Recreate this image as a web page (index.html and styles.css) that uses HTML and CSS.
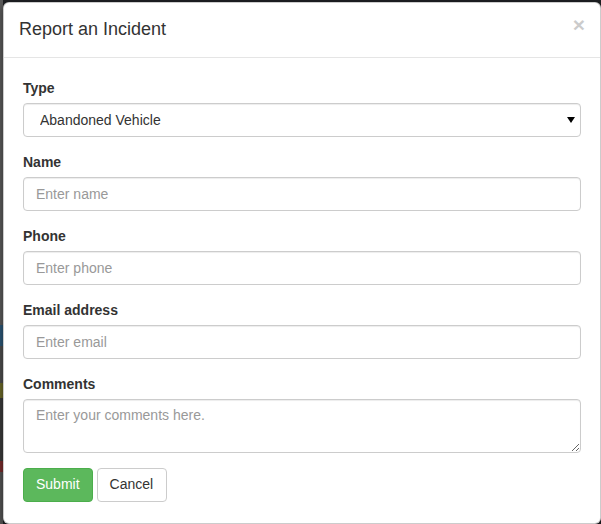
FILE: index.html
```html
<!DOCTYPE html>
<html lang="en">

<head>
    <meta charset="UTF-8">
    <meta name="viewport" content="width=device-width, initial-scale=1.0">
    <title>Report an Incident</title>
    <link rel="stylesheet" href="styles.css">
</head>

<body>
    <div class="backdrop">
        <div class="modal">
            <div class="modal-header">
                <button type="button" class="close">&times;</button>
                <h4 class="modal-title">Report an Incident</h4>
            </div>
            <div class="modal-body">
                <form>
                    <div class="form-group">
                        <label for="type">Type</label>
                        <div class="select-wrap">
                            <select id="type" class="form-control select">
                                <option>Abandoned Vehicle</option>
                                <option>Graffiti</option>
                                <option>Pothole</option>
                            </select>
                            <svg class="caret" width="8" height="6" viewBox="0 0 8 6">
                                <path d="M0 0 L8 0 L4 6 Z" fill="#000" />
                            </svg>
                        </div>
                    </div>
                    <div class="form-group">
                        <label for="name">Name</label>
                        <input id="name" class="form-control" type="text" placeholder="Enter name">
                    </div>
                    <div class="form-group">
                        <label for="phone">Phone</label>
                        <input id="phone" class="form-control" type="text" placeholder="Enter phone">
                    </div>
                    <div class="form-group">
                        <label for="email">Email address</label>
                        <input id="email" class="form-control" type="email" placeholder="Enter email">
                    </div>
                    <div class="form-group last">
                        <label for="comments">Comments</label>
                        <textarea id="comments" class="form-control" rows="2" placeholder="Enter your comments here."></textarea>
                    </div>
                    <div class="actions">
                        <button type="submit" class="btn btn-success">Submit</button>
                        <button type="button" class="btn btn-default">Cancel</button>
                    </div>
                </form>
            </div>
        </div>
    </div>
</body>

</html>
```

FILE: styles.css
```css
* {
    box-sizing: border-box;
}

html,
body {
    margin: 0;
    height: 100%;
}

body {
    font-family: "Liberation Sans", Arial, sans-serif;
    font-size: 14px;
    line-height: 1.42857;
    color: #333;
    overflow: hidden;
}

.backdrop {
    height: 100%;
    padding-top: 2px;
    padding-left: 3px;
    background:
        linear-gradient(to bottom, #5b5b5b 0, #5b5b5b 62%, #2d5878 62%, #2d5878 66%, #4f4f4f 66%, #4f4f4f 73%, #6d6a2a 73%, #6d6a2a 76%, #3b3b3b 76%, #3b3b3b 88%, #7a2d2d 88%, #7a2d2d 90%, #555 90%) left top / 3px 100% no-repeat,
        #1e2023;
}

.modal {
    width: 598px;
    background: #fff;
    border: 1px solid rgba(0, 0, 0, 0.2);
    border-radius: 6px;
    box-shadow: 0 3px 9px rgba(0, 0, 0, 0.5);
}

.modal-header {
    padding: 14px 15px;
    border-bottom: 1px solid #e5e5e5;
}

.modal-title {
    margin: 0;
    font-size: 18px;
    font-weight: normal;
    line-height: 1.42857;
}

.close {
    float: right;
    margin-top: -3px;
    margin-right: 0;
    padding: 0;
    border: 0;
    background: transparent;
    font-family: "Liberation Sans", Arial, sans-serif;
    font-size: 21px;
    font-weight: bold;
    line-height: 1;
    color: #000;
    opacity: 0.2;
    cursor: pointer;
}

.modal-body {
    padding: 21px 19px 21px 19px;
}

.form-group {
    margin-bottom: 16px;
}

.form-group.last {
    margin-bottom: 15px;
}

label {
    display: inline-block;
    margin-bottom: 4px;
    font-weight: bold;
}

.form-control {
    display: block;
    width: 100%;
    height: 34px;
    padding: 6px 12px;
    font-family: inherit;
    font-size: 14px;
    line-height: 1.42857;
    color: #555;
    background: #fff;
    border: 1px solid #ccc;
    border-radius: 4px;
    box-shadow: inset 0 1px 1px rgba(0, 0, 0, 0.075);
}

.form-control::placeholder {
    color: #999;
}

textarea.form-control {
    height: 54px;
    resize: vertical;
}

.select-wrap {
    position: relative;
}

.select {
    appearance: none;
    -webkit-appearance: none;
    padding: 7px 12px 5px 16px;
    color: #333;
}

.caret {
    position: absolute;
    right: 6px;
    top: 14px;
    pointer-events: none;
}

.actions {
    display: flex;
    gap: 4px;
}

.btn {
    display: inline-block;
    padding: 6px 12px;
    font-family: inherit;
    font-size: 14px;
    line-height: 1.42857;
    border: 1px solid transparent;
    border-radius: 4px;
    cursor: pointer;
}

.btn-success {
    color: #fff;
    background: #5cb85c;
    border-color: #4cae4c;
}

.btn-default {
    padding-right: 13px;
    color: #333;
    background: #fff;
    border-color: #ccc;
}
```
